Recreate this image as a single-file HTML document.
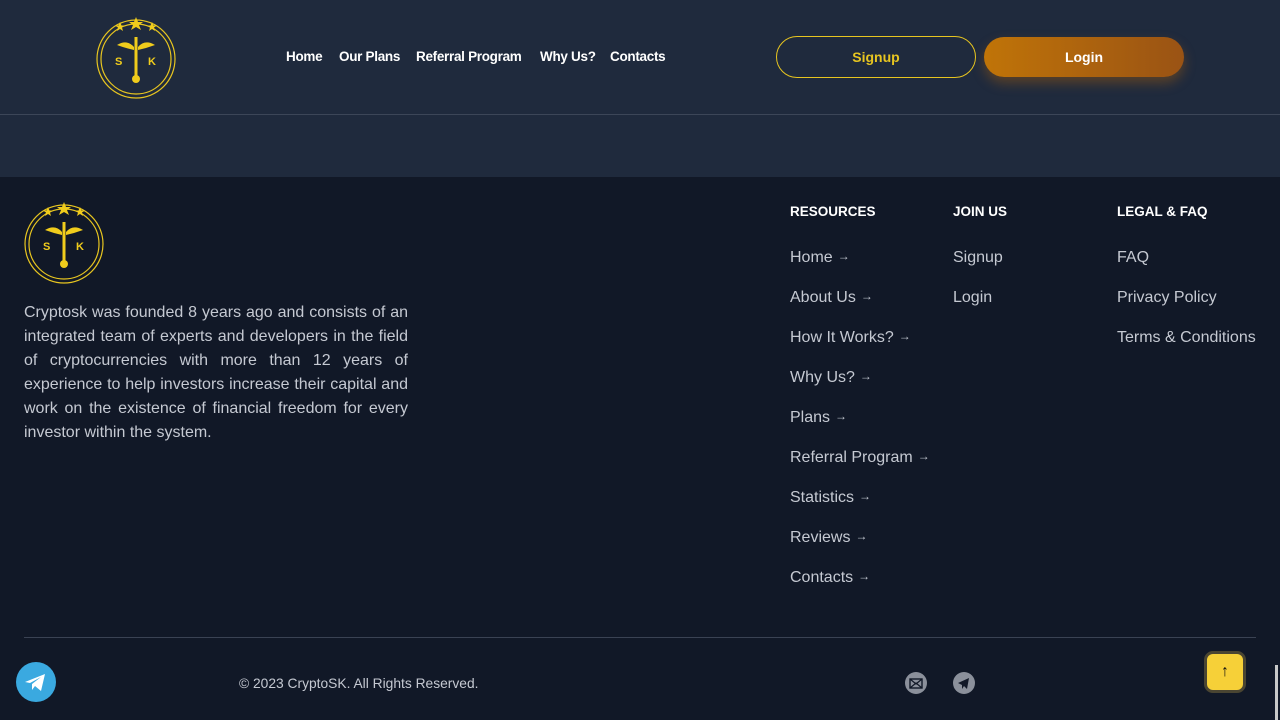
<!DOCTYPE html>
<html><head><meta charset="utf-8"><style>
*{margin:0;padding:0;box-sizing:border-box}
body{width:1280px;height:720px;overflow:hidden;background:#111827;font-family:"Liberation Sans",sans-serif;position:relative}
.hdr{position:absolute;left:0;top:0;width:1280px;height:115px;background:#1f2a3d;border-bottom:1px solid #3c4658}
.band{position:absolute;left:0;top:115px;width:1280px;height:62px;background:#1f2a3d}
.nav{position:absolute;top:49px;font-size:13.5px;font-weight:bold;color:#fff;letter-spacing:-0.3px}
.btn{position:absolute;top:36px;height:42px;border-radius:21px;font-size:14px;font-weight:bold;display:flex;align-items:center;justify-content:center}
.t{position:absolute;color:#c5c9d2;font-size:16px}
.h{position:absolute;color:#fff;font-size:13.5px;font-weight:bold;top:204px}
.ar{font-size:12px;margin-left:5px;position:relative;top:-2px}
</style></head><body>
<div class="hdr"></div><div class="band"></div>
<svg style="position:absolute;left:95px;top:15px" width="82" height="84" viewBox="0 0 82 84">
<g fill="none" stroke="#e7c520" stroke-width="1.2"><circle cx="41" cy="44" r="39"/><circle cx="41" cy="44" r="35"/></g>
<g fill="#f0cc1c"><path d="M41 2l2 5h5l-4 3 2 5-5-3-5 3 2-5-4-3h5z"/><path d="M25 7l1.5 3.5h3.5l-3 2 1 3.5-3-2-3 2 1-3.5-3-2h3.5z"/><path d="M57 7l1.5 3.5h3.5l-3 2 1 3.5-3-2-3 2 1-3.5-3-2h3.5z"/>
<path d="M22 30q10-6 17 2v3q-9-2-17-5zM60 30q-10-6-17 2v3q9-2 17-5z"/><rect x="39.5" y="22" width="3" height="40"/><circle cx="41" cy="64" r="4"/>
<text x="20" y="50" font-size="11" font-weight="bold" font-family="Liberation Sans">S</text><text x="53" y="50" font-size="11" font-weight="bold" font-family="Liberation Sans">K</text></g>
</svg>
<div class="nav" style="left:286px">Home</div><div class="nav" style="left:339px">Our Plans</div><div class="nav" style="left:416px">Referral Program</div><div class="nav" style="left:540px">Why Us?</div><div class="nav" style="left:610px">Contacts</div>
<div class="btn" style="left:776px;width:200px;border:1px solid #e7c520;color:#e7c520">Signup</div>
<div class="btn" style="left:984px;width:200px;top:37px;height:40px;background:linear-gradient(90deg,#c07408,#9a5314);color:#fff;box-shadow:0 6px 12px rgba(200,110,0,.35)">Login</div>
<svg style="position:absolute;left:23px;top:200px" width="82" height="84" viewBox="0 0 82 84">
<g fill="none" stroke="#e7c520" stroke-width="1.2"><circle cx="41" cy="44" r="39"/><circle cx="41" cy="44" r="35"/></g>
<g fill="#f0cc1c"><path d="M41 2l2 5h5l-4 3 2 5-5-3-5 3 2-5-4-3h5z"/><path d="M25 7l1.5 3.5h3.5l-3 2 1 3.5-3-2-3 2 1-3.5-3-2h3.5z"/><path d="M57 7l1.5 3.5h3.5l-3 2 1 3.5-3-2-3 2 1-3.5-3-2h3.5z"/>
<path d="M22 30q10-6 17 2v3q-9-2-17-5zM60 30q-10-6-17 2v3q9-2 17-5z"/><rect x="39.5" y="22" width="3" height="40"/><circle cx="41" cy="64" r="4"/>
<text x="20" y="50" font-size="11" font-weight="bold" font-family="Liberation Sans">S</text><text x="53" y="50" font-size="11" font-weight="bold" font-family="Liberation Sans">K</text></g>
</svg>
<div class="t" style="left:24px;top:301px;width:384px;line-height:24px;text-align:justify">Cryptosk was founded 8 years ago and consists of an integrated team of experts and developers in the field of cryptocurrencies with more than 12 years of experience to help investors increase their capital and work on the existence of financial freedom for every investor within the system.</div>
<div class="h" style="left:790px">RESOURCES</div><div class="h" style="left:953px">JOIN US</div><div class="h" style="left:1117px">LEGAL &amp; FAQ</div>
<div class="t" style="left:790px;top:249px">Home<span class="ar">→</span></div>
<div class="t" style="left:790px;top:289px">About Us<span class="ar">→</span></div>
<div class="t" style="left:790px;top:329px">How It Works?<span class="ar">→</span></div>
<div class="t" style="left:790px;top:369px">Why Us?<span class="ar">→</span></div>
<div class="t" style="left:790px;top:409px">Plans<span class="ar">→</span></div>
<div class="t" style="left:790px;top:449px">Referral Program<span class="ar">→</span></div>
<div class="t" style="left:790px;top:489px">Statistics<span class="ar">→</span></div>
<div class="t" style="left:790px;top:529px">Reviews<span class="ar">→</span></div>
<div class="t" style="left:790px;top:569px">Contacts<span class="ar">→</span></div>
<div class="t" style="left:953px;top:249px">Signup</div><div class="t" style="left:953px;top:289px">Login</div>
<div class="t" style="left:1117px;top:249px">FAQ</div><div class="t" style="left:1117px;top:289px">Privacy Policy</div><div class="t" style="left:1117px;top:329px">Terms &amp; Conditions</div>
<div style="position:absolute;left:24px;top:637px;width:1232px;height:1px;background:#3a4253"></div>
<div class="t" style="left:239px;top:676px;font-size:13.8px">© 2023 CryptoSK. All Rights Reserved.</div>
<svg style="position:absolute;left:905px;top:672px" width="22" height="22"><circle cx="11" cy="11" r="11" fill="#8b909b"/><rect x="5" y="7" width="12" height="9" fill="none" stroke="#111827" stroke-width="1.4"/><path d="M5 7l6 5 6-5M5 16l6-5 6 5" fill="none" stroke="#111827" stroke-width="1.2"/></svg>
<svg style="position:absolute;left:953px;top:672px" width="22" height="22"><circle cx="11" cy="11" r="11" fill="#8b909b"/><path d="M5 11l11-5-2 11-3-3-2 3v-4z" fill="#111827"/></svg>
<svg style="position:absolute;left:16px;top:662px" width="40" height="40"><circle cx="20" cy="20" r="20" fill="#3aa9e0"/><path d="M9 20l20-8-4 17-6-5-3 4v-6l9-7-11 6z" fill="#fff"/></svg>
<div style="position:absolute;left:1204px;top:651px;width:42px;height:42px;border-radius:9px;background:#f6d038;border:3px solid #4a4532;display:flex;align-items:center;justify-content:center;font-size:16px;font-weight:bold;color:#111">↑</div>
<div style="position:absolute;left:1275px;top:665px;width:3px;height:55px;background:#c8c8c8"></div>
</body></html>
